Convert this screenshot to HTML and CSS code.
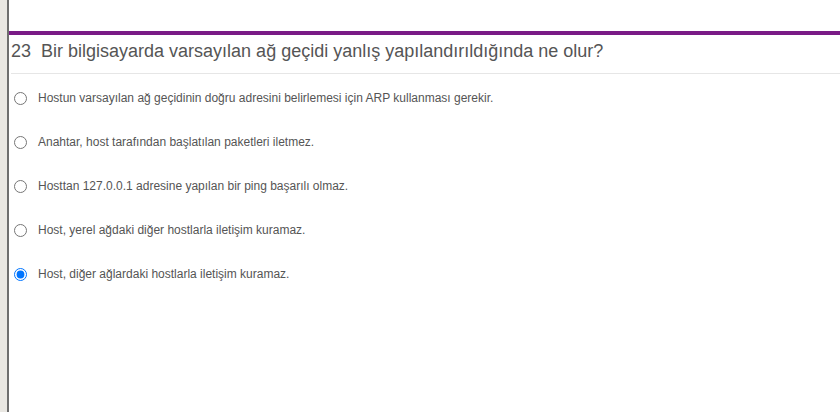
FILE: index.html
```html
<!DOCTYPE html>
<html>
<head>
<meta charset="utf-8">
<link rel="stylesheet" href="styles.css">
</head>
<body>
<div class="page">
  <div class="gutter"></div>
  <div class="main">
    <div class="topspace"></div>
    <div class="bar"></div>
    <h1 class="title">23&nbsp; Bir bilgisayarda varsayılan ağ geçidi yanlış yapılandırıldığında ne olur?</h1>
    <div class="divider"></div>
    <ul class="options">
      <li class="opt"><input type="radio" name="q"><span>Hostun varsayılan ağ geçidinin doğru adresini belirlemesi için ARP kullanması gerekir.</span></li>
      <li class="opt"><input type="radio" name="q"><span>Anahtar, host tarafından başlatılan paketleri iletmez.</span></li>
      <li class="opt"><input type="radio" name="q"><span>Hosttan 127.0.0.1 adresine yapılan bir ping başarılı olmaz.</span></li>
      <li class="opt"><input type="radio" name="q"><span>Host, yerel ağdaki diğer hostlarla iletişim kuramaz.</span></li>
      <li class="opt"><input type="radio" name="q" checked><span>Host, diğer ağlardaki hostlarla iletişim kuramaz.</span></li>
    </ul>
  </div>
</div>
</body>
</html>
```
FILE: styles.css
```css
html, body {
  margin: 0;
  padding: 0;
  background: #fff;
  font-family: "Liberation Sans", Arial, sans-serif;
}
.page {
  display: flex;
  height: 412px;
}
.gutter {
  width: 7px;
  background: #e9e7e2;
  border-right: 2px solid #6e6e6e;
  flex: none;
}
.main {
  flex: 1;
}
.topspace {
  height: 31px;
}
.bar {
  height: 4px;
  background: #7a1b86;
}
.title {
  margin: 0;
  padding: 5px 0 0 2px;
  font-size: 18px;
  font-weight: normal;
  color: #555;
  line-height: 22px;
  height: 38px;
  box-sizing: border-box;
}
.divider {
  height: 1px;
  background: #e6e6e6;
  margin-left: 2px;
}
.options {
  list-style: none;
  margin: 0;
  padding: 2px 0 0 0;
}
.opt {
  display: flex;
  align-items: center;
  height: 44px;
  font-size: 12px;
  color: #555;
}
.opt input {
  margin: 0 0 0 5px;
  width: 13px;
  height: 13px;
  flex: none;
}
.opt span {
  margin-left: 11px;
}
```
